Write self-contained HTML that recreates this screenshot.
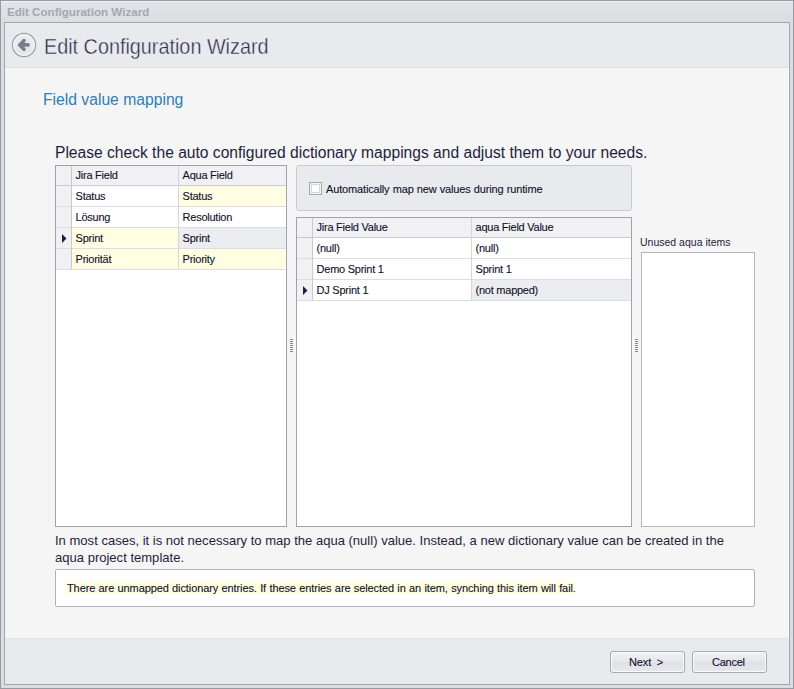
<!DOCTYPE html>
<html><head><meta charset="utf-8">
<style>
html,body{margin:0;padding:0;}
body{width:794px;height:689px;overflow:hidden;position:relative;background:#dcdde2;font-family:"Liberation Sans",sans-serif;color:#1e1e3c;}
.a{position:absolute;box-sizing:border-box;}
.t{position:absolute;white-space:pre;line-height:1;}
.g{position:absolute;white-space:pre;line-height:13px;font-size:11px;letter-spacing:-0.25px;color:#101028;-webkit-text-stroke:0.1px #101028;}
</style></head><body>
<!-- outer window -->
<div class="a" style="left:0;top:0;width:794px;height:689px;border:1px solid #979aa4;"></div>
<div class="a" style="left:1px;top:1px;width:792px;height:1px;background:#f2f3f5;"></div>
<div class="a" style="left:1px;top:2px;width:792px;height:19px;background:linear-gradient(#e3e4e8,#dcdde2);"></div>
<div class="t" style="left:7px;top:6.4px;font-size:11.6px;font-weight:bold;color:#a4a7b1;">Edit Configuration Wizard</div>
<!-- inner frame -->
<div class="a" style="left:4px;top:22px;width:786px;height:663px;border:1px solid #a3a5ae;background:#f5f5f5;"></div>
<!-- header -->
<div class="a" style="left:5px;top:23px;width:784px;height:44px;background:#e9eaee;"></div>
<div class="a" style="left:5px;top:67px;width:784px;height:1px;background:#dddee2;"></div>
<!-- back button -->
<svg class="a" style="left:11px;top:32px;" width="26" height="26" viewBox="0 0 26 26">
  <defs><linearGradient id="bg1" x1="0" y1="0" x2="0" y2="1"><stop offset="0" stop-color="#eceef1"/><stop offset="1" stop-color="#e3e4e8"/></linearGradient></defs>
  <circle cx="13" cy="13" r="11.6" fill="url(#bg1)" stroke="#9c9ea7" stroke-width="1.2"/>
  <circle cx="13" cy="13" r="10.4" fill="none" stroke="#f7f8fa" stroke-width="1"/>
  <polyline points="13,8.6 8.7,12.9 13,17.2" fill="none" stroke="#7b7e89" stroke-width="3.6" stroke-linecap="round" stroke-linejoin="round"/>
  <line x1="9.5" y1="12.9" x2="17" y2="12.9" stroke="#7b7e89" stroke-width="3.7" stroke-linecap="round"/>
</svg>
<div class="t" style="left:44px;top:36px;font-size:22px;color:#282844;-webkit-text-stroke:0.4px #e9eaee;transform-origin:0 0;transform:scaleX(0.9);">Edit Configuration Wizard</div>
<!-- footer -->
<div class="a" style="left:5px;top:638px;width:784px;height:1px;background:#e2e3e7;"></div>
<div class="a" style="left:5px;top:639px;width:784px;height:45px;background:#e9eaee;"></div>

<!-- content -->
<div class="a" style="left:788px;top:68px;width:1px;height:570px;background:#fbfbfb;"></div>
<div class="t" style="left:43px;top:92px;font-size:16px;color:#2f7db3;transform-origin:0 0;transform:scaleX(0.98);">Field value mapping</div>
<div class="t" style="left:55px;top:145px;font-size:16px;color:#1e1e3c;transform-origin:0 0;transform:scaleX(0.975);">Please check the auto configured dictionary mappings and adjust them to your needs.</div>

<!-- left grid -->
<div class="a" style="left:55px;top:165px;width:232px;height:362px;border:1px solid #a0a3ab;background:#fff;"></div>
<div class="a" style="left:56px;top:166px;width:230px;height:19px;background:#f1f1f3;"></div>
<div class="a" style="left:56px;top:186px;width:15px;height:83px;background:#f1f1f3;"></div>
<div class="a" style="left:179px;top:186px;width:107px;height:20px;background:#fffde2;"></div>
<div class="a" style="left:72px;top:228px;width:106px;height:20px;background:#fffde2;"></div>
<div class="a" style="left:179px;top:228px;width:107px;height:20px;background:#ecedf0;"></div>
<div class="a" style="left:72px;top:249px;width:214px;height:20px;background:#fffde2;"></div>
<div class="a" style="left:56px;top:185px;width:230px;height:1px;background:#c9cacf;"></div>
<div class="a" style="left:56px;top:206px;width:230px;height:1px;background:#dcdde1;"></div>
<div class="a" style="left:56px;top:227px;width:230px;height:1px;background:#dcdde1;"></div>
<div class="a" style="left:56px;top:248px;width:230px;height:1px;background:#dcdde1;"></div>
<div class="a" style="left:56px;top:269px;width:230px;height:1px;background:#dcdde1;"></div>
<div class="a" style="left:71px;top:166px;width:1px;height:103px;background:#c9cacf;"></div>
<div class="a" style="left:178px;top:166px;width:1px;height:103px;background:#d5d6db;"></div>
<svg class="a" style="left:62px;top:234px;" width="5" height="9"><path d="M0 0 L4.5 4.5 L0 9 Z" fill="#1e1e3c"/></svg>
<div class="g" style="left:75.6px;top:169px;">Jira Field</div>
<div class="g" style="left:182.6px;top:169px;">Aqua Field</div>
<div class="g" style="left:75.6px;top:190px;">Status</div>
<div class="g" style="left:182.6px;top:190px;">Status</div>
<div class="g" style="left:75.6px;top:211px;">Lösung</div>
<div class="g" style="left:182.6px;top:211px;">Resolution</div>
<div class="g" style="left:75.6px;top:232px;">Sprint</div>
<div class="g" style="left:182.6px;top:232px;">Sprint</div>
<div class="g" style="left:75.6px;top:253px;">Priorität</div>
<div class="g" style="left:182.6px;top:253px;">Priority</div>

<!-- checkbox panel -->
<div class="a" style="left:296px;top:165px;width:336px;height:46px;border:1px solid #c9cacf;border-radius:3px;background:#e9eaee;"></div>
<div class="a" style="left:309px;top:182px;width:13px;height:13px;border:1px solid #a6a8b0;background:#fff;"></div>
<div class="a" style="left:310px;top:183px;width:11px;height:11px;border:1px solid #f4f4f6;"></div>
<div class="a" style="left:311px;top:184px;width:9px;height:9px;border:1px solid #d5d7dd;"></div>
<div class="g" style="left:326px;top:183px;letter-spacing:-0.15px;word-spacing:0.3px;">Automatically map new values during runtime</div>

<!-- right grid -->
<div class="a" style="left:296px;top:217px;width:336px;height:310px;border:1px solid #a0a3ab;background:#fff;"></div>
<div class="a" style="left:297px;top:218px;width:334px;height:19px;background:#f1f1f3;"></div>
<div class="a" style="left:297px;top:238px;width:15px;height:62px;background:#f1f1f3;"></div>
<div class="a" style="left:472px;top:280px;width:159px;height:20px;background:#ecedf0;"></div>
<div class="a" style="left:297px;top:237px;width:334px;height:1px;background:#c9cacf;"></div>
<div class="a" style="left:297px;top:258px;width:334px;height:1px;background:#dcdde1;"></div>
<div class="a" style="left:297px;top:279px;width:334px;height:1px;background:#dcdde1;"></div>
<div class="a" style="left:297px;top:300px;width:334px;height:1px;background:#dcdde1;"></div>
<div class="a" style="left:312px;top:218px;width:1px;height:82px;background:#c9cacf;"></div>
<div class="a" style="left:471px;top:218px;width:1px;height:82px;background:#d5d6db;"></div>
<svg class="a" style="left:303px;top:286px;" width="5" height="9"><path d="M0 0 L4.5 4.5 L0 9 Z" fill="#1e1e3c"/></svg>
<div class="g" style="left:316.6px;top:221px;">Jira Field Value</div>
<div class="g" style="left:475.6px;top:221px;">aqua Field Value</div>
<div class="g" style="left:316.6px;top:242px;">(null)</div>
<div class="g" style="left:475.6px;top:242px;">(null)</div>
<div class="g" style="left:316.6px;top:263px;">Demo Sprint 1</div>
<div class="g" style="left:475.6px;top:263px;">Sprint 1</div>
<div class="g" style="left:316.6px;top:284px;">DJ Sprint 1</div>
<div class="g" style="left:475.6px;top:284px;">(not mapped)</div>

<!-- unused list -->
<div class="t" style="left:640px;top:237px;font-size:10.5px;">Unused aqua items</div>
<div class="a" style="left:641px;top:252px;width:114px;height:275px;border:1px solid #b5b7be;background:#fff;"></div>

<div class="t" style="left:55.3px;top:532px;font-size:13px;line-height:17px;transform-origin:0 0;transform:scaleX(1.003);">In most cases, it is not necessary to map the aqua (null) value. Instead, a new dictionary value can be created in the
aqua project template.</div>

<!-- warning box -->
<div class="a" style="left:55px;top:569px;width:700px;height:38px;border:1px solid #b0b2ba;border-radius:2px;background:#fff;"></div>
<div class="a" style="left:67px;top:581px;width:508px;height:13px;background:#fffde2;"></div>
<div class="g" style="left:67px;top:582px;letter-spacing:-0.1px;word-spacing:0.4px;">There are unmapped dictionary entries. If these entries are selected in an item, synching this item will fail.</div>

<!-- buttons -->
<div class="a" style="left:610px;top:651px;width:75px;height:22px;border:1px solid #a7a9b1;border-radius:3px;box-shadow:inset 0 0 0 1px #fbfbfc;background:linear-gradient(#f2f2f5,#e6e7eb 45%,#dfe1e6 55%,#e7e8eb);"></div>
<div class="a" style="left:692px;top:651px;width:75px;height:22px;border:1px solid #a7a9b1;border-radius:3px;box-shadow:inset 0 0 0 1px #fbfbfc;background:linear-gradient(#f2f2f5,#e6e7eb 45%,#dfe1e6 55%,#e7e8eb);"></div>
<div class="g" style="left:629px;top:656px;letter-spacing:-0.1px;word-spacing:2.5px;">Next &gt;</div>
<div class="g" style="left:712px;top:656px;">Cancel</div>
<!-- splitters -->
<svg class="a" style="left:290px;top:339px;" width="3" height="13"><rect x="0" y="0" width="3" height="1" fill="#a3a5ae"/><rect x="0.5" y="0" width="2" height="1" fill="#767985"/><rect x="0" y="2" width="3" height="1" fill="#a3a5ae"/><rect x="0.5" y="2" width="2" height="1" fill="#767985"/><rect x="0" y="4" width="3" height="1" fill="#a3a5ae"/><rect x="0.5" y="4" width="2" height="1" fill="#767985"/><rect x="0" y="6" width="3" height="1" fill="#a3a5ae"/><rect x="0.5" y="6" width="2" height="1" fill="#767985"/><rect x="0" y="8" width="3" height="1" fill="#a3a5ae"/><rect x="0.5" y="8" width="2" height="1" fill="#767985"/><rect x="0" y="10" width="3" height="1" fill="#a3a5ae"/><rect x="0.5" y="10" width="2" height="1" fill="#767985"/><rect x="0" y="12" width="3" height="1" fill="#a3a5ae"/><rect x="0.5" y="12" width="2" height="1" fill="#767985"/></svg>
<svg class="a" style="left:635px;top:339px;" width="3" height="13"><rect x="0" y="0" width="3" height="1" fill="#a3a5ae"/><rect x="0.5" y="0" width="2" height="1" fill="#767985"/><rect x="0" y="2" width="3" height="1" fill="#a3a5ae"/><rect x="0.5" y="2" width="2" height="1" fill="#767985"/><rect x="0" y="4" width="3" height="1" fill="#a3a5ae"/><rect x="0.5" y="4" width="2" height="1" fill="#767985"/><rect x="0" y="6" width="3" height="1" fill="#a3a5ae"/><rect x="0.5" y="6" width="2" height="1" fill="#767985"/><rect x="0" y="8" width="3" height="1" fill="#a3a5ae"/><rect x="0.5" y="8" width="2" height="1" fill="#767985"/><rect x="0" y="10" width="3" height="1" fill="#a3a5ae"/><rect x="0.5" y="10" width="2" height="1" fill="#767985"/><rect x="0" y="12" width="3" height="1" fill="#a3a5ae"/><rect x="0.5" y="12" width="2" height="1" fill="#767985"/></svg>
</body></html>
